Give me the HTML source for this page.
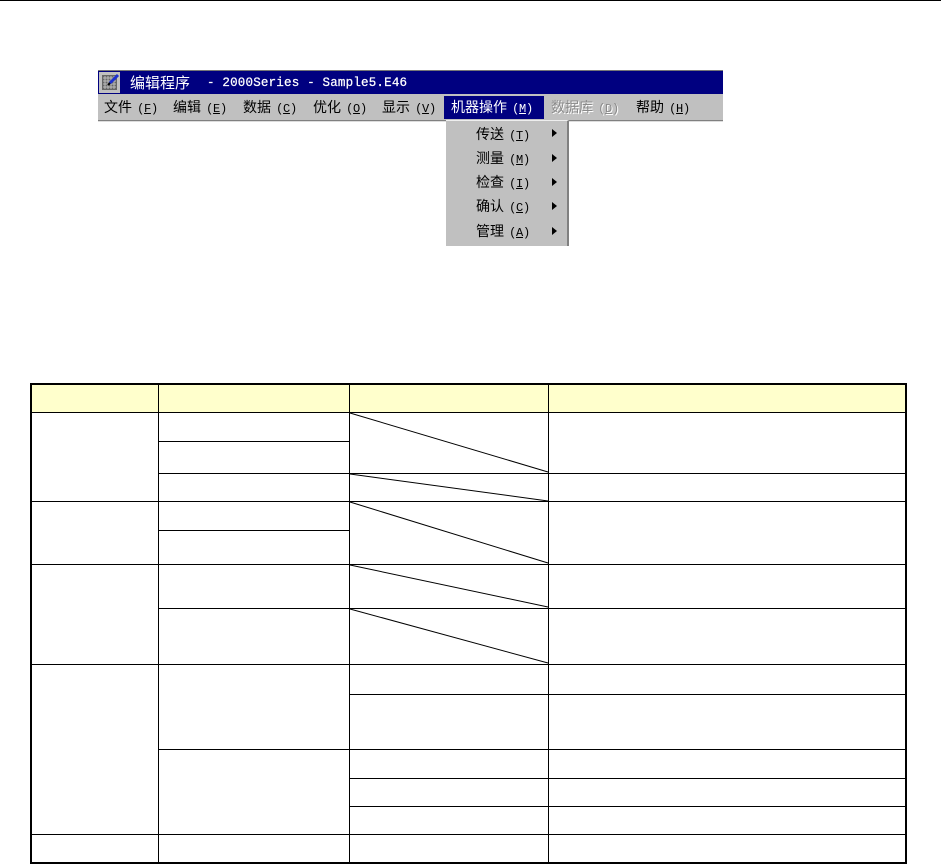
<!DOCTYPE html>
<html lang="zh"><head><meta charset="utf-8"><style>
html,body{margin:0;padding:0;background:#fff;width:941px;height:864px;overflow:hidden}
.a{position:absolute}
.t{position:absolute;white-space:pre;font:14px/16px "WenQuanYi Zen Hei","Noto Sans CJK SC",sans-serif;color:#000;filter:blur(.35px)}
.m{font-family:"Liberation Mono","WenQuanYi Zen Hei",monospace;font-size:12px;letter-spacing:-.3px;margin-left:2px}
.u{text-decoration:underline}
.arr{position:absolute;width:0;height:0;border-left:5px solid #000;border-top:4px solid transparent;border-bottom:4px solid transparent}
</style></head><body>
<div class="a" style="left:0;top:0;width:941px;height:1px;background:#000"></div>

<div class="a" style="left:98px;top:70px;width:625px;height:24px;background:#000080;border-top:1px solid #777;box-sizing:border-box"></div>
<div class="a" style="left:98px;top:94px;width:625px;height:27px;background:#c0c0c0;border-bottom:1px solid #808080;box-sizing:border-box"></div>
<div class="a" style="left:98px;top:121px;width:625px;height:1px;background:#ddd"></div>

<svg class="a" style="left:99px;top:72px" width="22" height="21" viewBox="0 0 22 21">
<rect x="0" y="0" width="21" height="21" fill="#c0c0c0"/>
<rect x="3" y="3" width="15" height="15" fill="#666"/>
<path d="M4 6H17M4 9H17M4 12H17M4 15H17M6 4V17M9 4V17M12 4V17M15 4V17" stroke="#bbb" stroke-width="1"/>
<path d="M11 11L19 3" stroke="#1c2fd0" stroke-width="3"/>
<path d="M9 13L11 11" stroke="#000" stroke-width="2"/>
</svg>
<div class="t" style="left:130px;top:75px;color:#fff;font-size:15px">编辑程序</div>
<div class="t" style="left:207px;top:75px;color:#fff;font-family:'Liberation Mono',monospace;font-size:12.5px;letter-spacing:.2px;-webkit-text-stroke:.25px #fff">- 2000Series - Sample5.E46</div>

<div class="a" style="left:444px;top:96px;width:100px;height:23px;background:#000080"></div>

<div class="t" style="left:104px;top:99px">文件 <span class="m">(<span class="u">F</span>)</span></div>
<div class="t" style="left:173px;top:99px">编辑 <span class="m">(<span class="u">E</span>)</span></div>
<div class="t" style="left:243px;top:99px">数据 <span class="m">(<span class="u">C</span>)</span></div>
<div class="t" style="left:313px;top:99px">优化 <span class="m">(<span class="u">O</span>)</span></div>
<div class="t" style="left:382px;top:99px">显示 <span class="m">(<span class="u">V</span>)</span></div>
<div class="t" style="left:451px;top:99px;color:#fff">机器操作 <span class="m">(<span class="u">M</span>)</span></div>
<div class="t" style="left:552px;top:100px;color:#fff">数据库 <span class="m">(<span class="u">D</span>)</span></div>
<div class="t" style="left:551px;top:99px;color:#8a8a8a">数据库 <span class="m">(<span class="u">D</span>)</span></div>
<div class="t" style="left:636px;top:99px">帮助 <span class="m">(<span class="u">H</span>)</span></div>

<div class="a" style="left:446px;top:120px;width:123px;height:126px;background:#c0c0c0;border-top:1px solid #eee;border-right:2px solid #808080;box-sizing:border-box"></div>
<div class="t" style="left:476px;top:126px">传送 <span class="m">(<span class="u">T</span>)</span></div>
<div class="t" style="left:476px;top:150px">测量 <span class="m">(<span class="u">M</span>)</span></div>
<div class="t" style="left:476px;top:174px">检查 <span class="m">(<span class="u">I</span>)</span></div>
<div class="t" style="left:476px;top:198px">确认 <span class="m">(<span class="u">C</span>)</span></div>
<div class="t" style="left:476px;top:223px">管理 <span class="m">(<span class="u">A</span>)</span></div>
<div class="arr" style="left:552px;top:129px"></div>
<div class="arr" style="left:552px;top:154px"></div>
<div class="arr" style="left:552px;top:178px"></div>
<div class="arr" style="left:552px;top:202px"></div>
<div class="arr" style="left:552px;top:227px"></div>

<svg class="a" style="left:0;top:0" width="941" height="864" viewBox="0 0 941 864" shape-rendering="crispEdges">
<rect x="32" y="384" width="874" height="28" fill="#ffffcc"/>
<g fill="#000">
<rect x="30" y="383" width="877" height="2"/>
<rect x="30" y="862" width="877" height="2"/>
<rect x="30" y="383" width="2" height="481"/>
<rect x="905" y="383" width="2" height="481"/>
<rect x="158" y="384" width="1" height="478"/>
<rect x="349" y="384" width="1" height="478"/>
<rect x="548" y="384" width="1" height="478"/>
<rect x="31" y="412" width="875" height="1"/>
<rect x="158" y="441" width="191" height="1"/>
<rect x="158" y="473" width="748" height="1"/>
<rect x="31" y="501" width="875" height="1"/>
<rect x="158" y="530" width="191" height="1"/>
<rect x="31" y="564" width="875" height="1"/>
<rect x="158" y="608" width="748" height="1"/>
<rect x="31" y="664" width="875" height="1"/>
<rect x="349" y="694" width="557" height="1"/>
<rect x="158" y="749" width="748" height="1"/>
<rect x="349" y="778" width="557" height="1"/>
<rect x="349" y="806" width="557" height="1"/>
<rect x="31" y="834" width="875" height="1"/>
</g>
</svg>
<svg class="a" style="left:0;top:0" width="941" height="864" viewBox="0 0 941 864">
<g stroke="#000" stroke-width="1" fill="none">
<line x1="350" y1="413" x2="548" y2="472"/>
<line x1="350" y1="474" x2="548" y2="501"/>
<line x1="350" y1="502" x2="548" y2="563"/>
<line x1="350" y1="565" x2="548" y2="607"/>
<line x1="350" y1="609" x2="548" y2="663"/>
</g>
</svg>
</body></html>
